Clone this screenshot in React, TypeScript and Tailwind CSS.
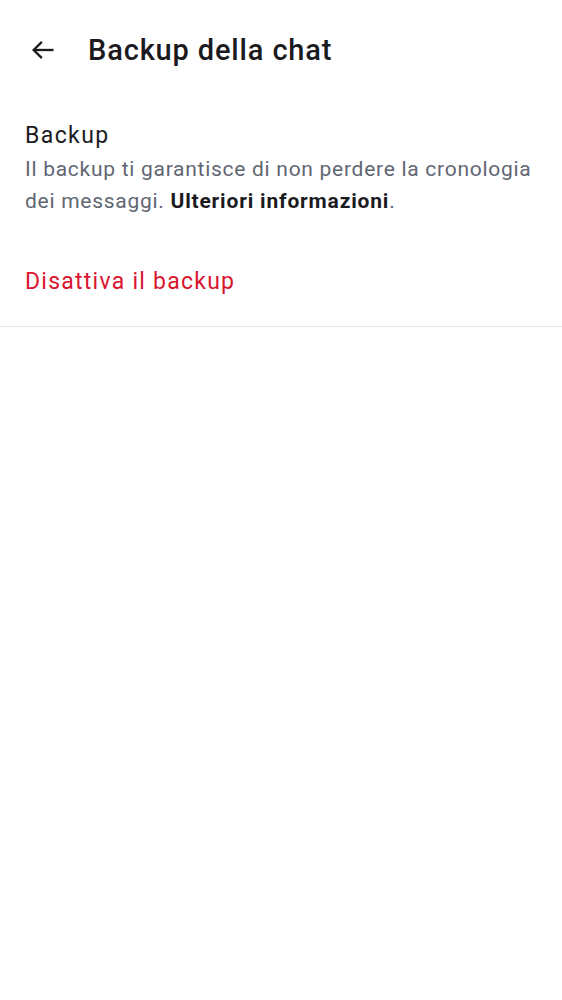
export default function App() {
  return (
    <div className="min-h-[1000px] w-full bg-white text-[#1b1b1f]" style={{ fontFamily: "Roboto, 'Noto Sans', sans-serif" }}>
      <header className="flex h-[100px] items-center">
        <button className="ml-[29px] flex h-[28px] w-[28px] items-center justify-center">
          <svg width="28" height="28" viewBox="0 0 24 24" fill="none" stroke="#1b1b1f" strokeWidth="2" strokeLinecap="square">
            <path d="M20 12H5" />
            <path d="M11 5l-7 7 7 7" strokeLinecap="butt" strokeLinejoin="miter" />
          </svg>
        </button>
        <h1 className="ml-[31px] pt-[1px] text-[29px] font-medium leading-none tracking-[0.85px]">Backup della chat</h1>
      </header>
      <section className="px-[25px] pt-[21px]">
        <div className="text-[23px] leading-[30px] tracking-[1.4px] text-[#1b1b1f]">Backup</div>
        <p className="pt-[2px] text-[21px] leading-[32px] tracking-[0.72px] text-[#5f6672]">
          Il backup ti garantisce di non perdere la cronologia dei messaggi.{" "}
          <span className="font-bold text-[#1b1b1f] tracking-[0.82px]">Ulteriori informazioni</span>.
        </p>
      </section>
      <div className="px-[25px] pt-[49px] pb-[28px]">
        <div className="text-[23px] leading-[32px] tracking-[1.25px] text-[#d8162f]">Disattiva il backup</div>
      </div>
      <div className="h-px bg-[#e6e6eb]" />
    </div>
  );
}
